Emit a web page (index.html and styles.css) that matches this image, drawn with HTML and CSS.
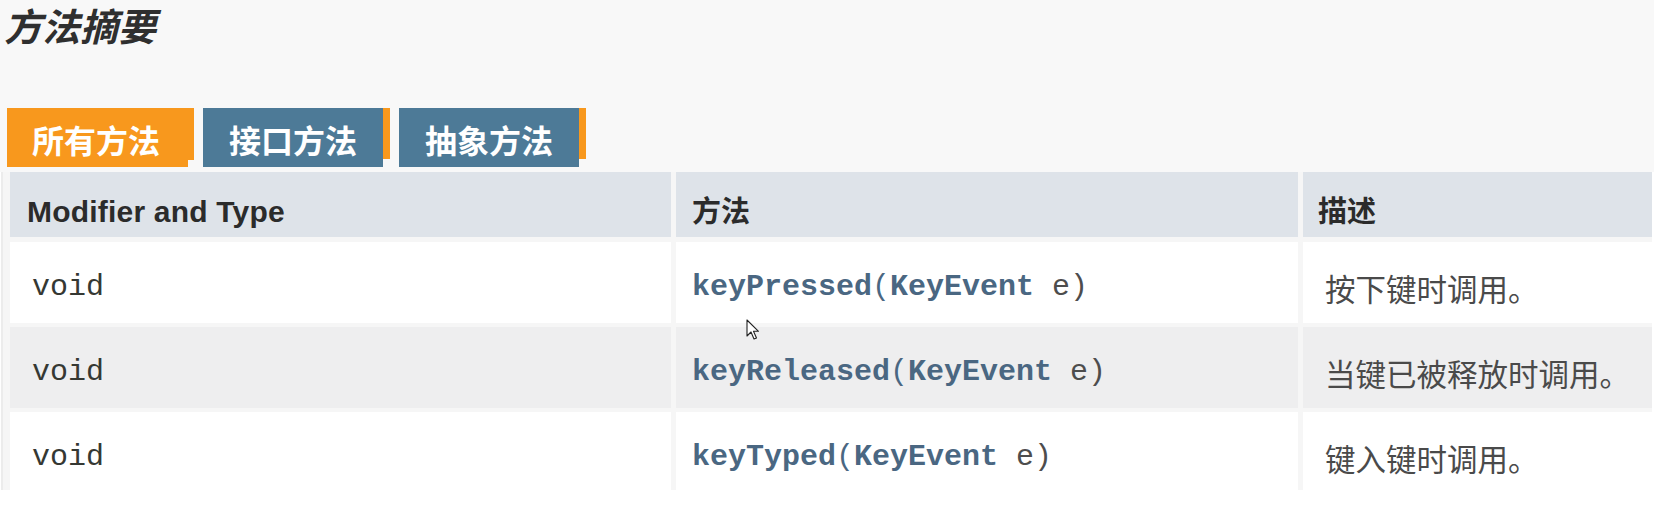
FILE: index.html
```html
<!DOCTYPE html>
<html lang="zh-CN">
<head>
<meta charset="utf-8">
<title>方法摘要</title>
<link rel="stylesheet" href="styles.css">
</head>
<body>
<div class="page">
  <h3 class="title">方法摘要</h3>
  <div class="tabs">
    <div class="tab active"><span class="tab-label">所有方法</span><span class="tab-end"></span></div>
    <div class="tab"><span class="tab-label">接口方法</span><span class="tab-end"></span></div>
    <div class="tab"><span class="tab-label">抽象方法</span><span class="tab-end"></span></div>
  </div>
  <div class="summary">
    <div class="cell head head-latin">Modifier and Type</div>
    <div class="cell head head-cjk">方法</div>
    <div class="cell head head-cjk head-last">描述</div>

    <div class="cell row-a type"><code>void</code></div>
    <div class="cell row-a method"><code><b>keyPressed</b><span class="paren">(</span><b>KeyEvent</b>&nbsp;e)</code></div>
    <div class="cell row-a desc">按下键时调用。</div>

    <div class="cell row-b type"><code>void</code></div>
    <div class="cell row-b method"><code><b>keyReleased</b><span class="paren">(</span><b>KeyEvent</b>&nbsp;e)</code></div>
    <div class="cell row-b desc">当键已被释放时调用。</div>

    <div class="cell row-c type"><code>void</code></div>
    <div class="cell row-c method"><code><b>keyTyped</b><span class="paren">(</span><b>KeyEvent</b>&nbsp;e)</code></div>
    <div class="cell row-c desc">键入键时调用。</div>
  </div>
  <svg class="cursor" width="14" height="22" viewBox="0 0 14 22">
    <path d="M1 1 L1 17 L5 13 L8 20 L10.5 19 L7.5 12.3 L12.5 12.3 Z" fill="#ffffff" stroke="#222222" stroke-width="1.1" stroke-linejoin="round"/>
  </svg>
</div>
</body>
</html>
```

FILE: styles.css
```css
html, body {
  margin: 0;
  padding: 0;
}

body {
  background: #ffffff;
  width: 1654px;
  height: 506px;
  overflow: hidden;
}

.page {
  position: relative;
  height: 506px;
}

.title {
  margin: 0;
  padding: 5px 0 0 4px;
  height: 108px;
  box-sizing: border-box;
  font-family: "Noto Sans CJK SC", sans-serif;
  font-size: 38px;
  line-height: 40px;
  font-weight: 700;
  font-style: italic;
  color: #2f2f2f;
  background: #f8f8f8;
}

.tabs {
  display: flex;
  align-items: flex-start;
  gap: 9px;
  padding-left: 7px;
  height: 64px;
  background: #f8f8f8;
}

.tab {
  display: flex;
  align-items: flex-start;
}

.tab-label {
  display: block;
  height: 59px;
  box-sizing: border-box;
  padding: 15px 26px 0 26px;
  background: #4d7a97;
  color: #ffffff;
  font-family: "Noto Sans CJK SC", sans-serif;
  font-size: 32px;
  line-height: 32px;
  font-weight: 700;
}

.tab-end {
  display: block;
  width: 7px;
  height: 51px;
  background: #f8981d;
}

.tab.active .tab-label {
  background: #f8981d;
  padding-left: 25px;
  padding-right: 28px;
}

.tab.active .tab-end {
  width: 6px;
  height: 52px;
}

.summary {
  display: grid;
  grid-template-columns: 661px 622px 1fr;
  grid-template-rows: 66px 81px 81px 78px;
  column-gap: 5px;
  row-gap: 4px;
  padding-left: 7px;
  border-left: 2px solid #ececec;
  margin-left: 1px;
  background: #f6f6f6;
  width: 1651px;
  box-sizing: border-box;
}

.cell {
  box-sizing: border-box;
  white-space: nowrap;
}

.head {
  background: #dee3e9;
  color: #2b2b2b;
  font-weight: 700;
  margin-bottom: 1px;
}

.head-latin {
  font-family: "Liberation Sans", Arial, sans-serif;
  font-size: 30px;
  line-height: 30px;
  letter-spacing: 0.2px;
  padding: 25px 0 0 17px;
}

.head-cjk {
  font-family: "Noto Sans CJK SC", sans-serif;
  font-size: 29px;
  line-height: 29px;
  padding: 23px 0 0 16px;
}

.head-last {
  padding-left: 15px;
}

.row-a, .row-c {
  background: #ffffff;
}

.row-b {
  background: #eeeeef;
}

code {
  font-family: "Liberation Mono", "Courier New", monospace;
  font-size: 30px;
  line-height: 30px;
}

.type {
  padding: 30px 0 0 22px;
  color: #353833;
}

.method {
  padding: 30px 0 0 16px;
  color: #4d4d4d;
}

.method b {
  color: #4a6782;
  font-weight: 700;
}

.method .paren {
  color: #4a6782;
}

.desc {
  font-family: "Noto Sans CJK SC", sans-serif;
  font-size: 30.5px;
  line-height: 30px;
  font-weight: 400;
  padding: 31px 0 0 22px;
  color: #4a4a4a;
}

.cursor {
  position: absolute;
  left: 746px;
  top: 319px;
}
```
